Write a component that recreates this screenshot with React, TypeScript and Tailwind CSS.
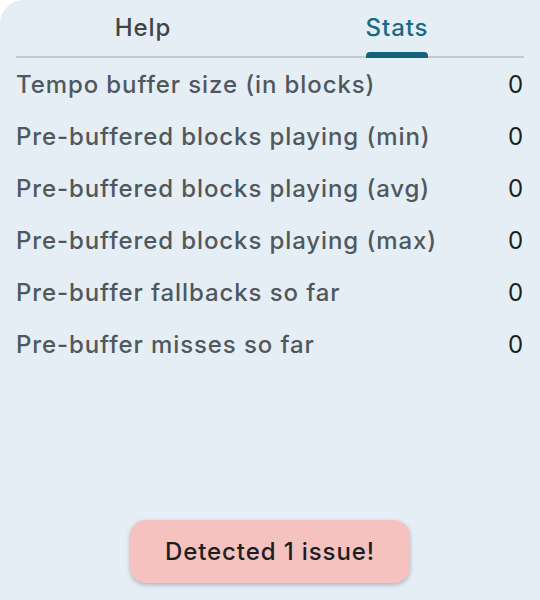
import { useState } from "react";

const STATS: { label: string; value: number }[] = [
  { label: "Tempo buffer size (in blocks)", value: 0 },
  { label: "Pre-buffered blocks playing (min)", value: 0 },
  { label: "Pre-buffered blocks playing (avg)", value: 0 },
  { label: "Pre-buffered blocks playing (max)", value: 0 },
  { label: "Pre-buffer fallbacks so far", value: 0 },
  { label: "Pre-buffer misses so far", value: 0 },
];

export default function App() {
  const [tab, setTab] = useState<"help" | "stats">("stats");

  return (
    <div className="h-[600px] w-[540px] bg-white font-['Inter',sans-serif] tracking-[0.9px]">
      <div className="flex h-full flex-col rounded-tl-[24px] bg-[#e5eef4] px-4">
        {/* Tabs */}
        <div className="flex border-b-2 border-[#c3cbd2]">
          {(["help", "stats"] as const).map((t) => (
            <button
              key={t}
              type="button"
              onClick={() => setTab(t)}
              className="flex flex-1 justify-center tracking-[0.9px]"
            >
              <span
                className={`relative pt-[13px] pb-[14px] text-[24px] leading-[29px] font-medium ${
                  tab === t ? "text-[#1a6a84]" : "text-[#3f4548]"
                }`}
              >
                {t === "help" ? "Help" : "Stats"}
                {tab === t && (
                  <span className="absolute -bottom-[2px] left-0 right-0 h-[6px] rounded-t-[4px] bg-[#14627c]" />
                )}
              </span>
            </button>
          ))}
        </div>

        {/* Stats list */}
        <div className="flex flex-col pt-[1px]">
          {STATS.map((s) => (
            <div
              key={s.label}
              className="flex h-[52px] items-center justify-between text-[24px]"
            >
              <span className="font-medium text-[#50585e]">{s.label}</span>
              <span className="text-[#1c1f21]">{s.value}</span>
            </div>
          ))}
        </div>

        <div className="flex flex-1 items-end justify-center pb-[17px]">
          <button
            type="button"
            className="h-[63px] w-[280px] rounded-[16px] bg-[#f5c2c0] text-[24px] font-medium tracking-[0.9px] text-[#1c1f21] shadow-[0_2px_4px_rgba(60,80,90,0.35)]"
          >
            Detected 1 issue!
          </button>
        </div>
      </div>
    </div>
  );
}
